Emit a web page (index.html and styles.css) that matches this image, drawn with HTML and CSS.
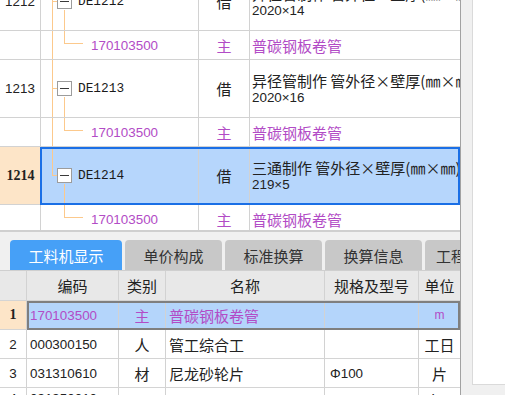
FILE: index.html
```html
<!DOCTYPE html>
<html lang="zh-CN">
  <head>
    <meta charset="UTF-8" />
    <title>定额子目</title>
    <link rel="stylesheet" href="styles.css">
  </head>
  <body>
    <div class="layout">
      <div class="main">
        <!-- 定额列表 -->
        <div class="grid">
          <div class="grid-body">
            <div class="row de">
              <div class="cell num">1212</div>
              <div class="cell tree trunk"><span class="toggle"></span><span class="de-code">DE1212</span></div>
              <div class="cell kind">借</div>
              <div class="cell name"><span class="line1">异径管制作 管外径×壁厚(㎜×㎜)</span><span class="line2">2020×14</span></div>
            </div>
            <div class="row sub">
              <div class="cell num"></div>
              <div class="cell tree trunk"><span class="mat-code">170103500</span></div>
              <div class="cell kind purple">主</div>
              <div class="cell name purple">普碳钢板卷管</div>
            </div>
            <div class="row de">
              <div class="cell num">1213</div>
              <div class="cell tree trunk"><span class="toggle"></span><span class="de-code">DE1213</span></div>
              <div class="cell kind">借</div>
              <div class="cell name"><span class="line1">异径管制作 管外径×壁厚(㎜×㎜)</span><span class="line2">2020×16</span></div>
            </div>
            <div class="row sub">
              <div class="cell num"></div>
              <div class="cell tree trunk"><span class="mat-code">170103500</span></div>
              <div class="cell kind purple">主</div>
              <div class="cell name purple">普碳钢板卷管</div>
            </div>
            <div class="row de selected">
              <div class="cell num">1214</div>
              <div class="cell tree trunk-end"><span class="toggle"></span><span class="de-code">DE1214</span></div>
              <div class="cell kind">借</div>
              <div class="cell name"><span class="line1">三通制作 管外径×壁厚(㎜×㎜)</span><span class="line2">219×5</span></div>
            </div>
            <div class="row sub">
              <div class="cell num"></div>
              <div class="cell tree"><span class="mat-code">170103500</span></div>
              <div class="cell kind purple">主</div>
              <div class="cell name purple">普碳钢板卷管</div>
            </div>
          </div>
        </div>

        <!-- 工料机 -->
        <div class="bottom">
          <div class="tabs">
            <div class="tab active">工料机显示</div>
            <div class="tab">单价构成</div>
            <div class="tab">标准换算</div>
            <div class="tab">换算信息</div>
            <div class="tab">工程量明细</div>
          </div>
          <div class="mat-table">
            <div class="mat-row head">
              <div class="mcell"></div>
              <div class="mcell c">编码</div>
              <div class="mcell c">类别</div>
              <div class="mcell c">名称</div>
              <div class="mcell c">规格及型号</div>
              <div class="mcell c">单位</div>
            </div>
            <div class="mat-row selected">
              <div class="mcell idx">1</div>
              <div class="mcell code purple">170103500</div>
              <div class="mcell c purple">主</div>
              <div class="mcell txt purple">普碳钢板卷管</div>
              <div class="mcell"></div>
              <div class="mcell c unit purple">m</div>
            </div>
            <div class="mat-row">
              <div class="mcell idx">2</div>
              <div class="mcell code">000300150</div>
              <div class="mcell c">人</div>
              <div class="mcell txt">管工综合工</div>
              <div class="mcell"></div>
              <div class="mcell c">工日</div>
            </div>
            <div class="mat-row">
              <div class="mcell idx">3</div>
              <div class="mcell code">031310610</div>
              <div class="mcell c">材</div>
              <div class="mcell txt">尼龙砂轮片</div>
              <div class="mcell spec">Φ100</div>
              <div class="mcell c">片</div>
            </div>
            <div class="mat-row last">
              <div class="mcell idx">4</div>
              <div class="mcell code">031350010</div>
              <div class="mcell c">材</div>
              <div class="mcell txt">低碳钢焊条</div>
              <div class="mcell spec">综合</div>
              <div class="mcell c">kg</div>
            </div>
          </div>
        </div>
      </div>
      <div class="side"></div>
    </div>
  </body>
</html>
```

FILE: styles.css
```css
body {
  margin: 0;
  background: #f0f0f0;
  font-family: "Liberation Sans", "Noto Sans CJK SC", sans-serif;
  color: #222;
  overflow: hidden;
}

.layout {
  display: flex;
  height: 395px;
}

.main {
  width: 461px;
  flex-shrink: 0;
  box-sizing: border-box;
  border-right: 1px solid #a2a2a2;
  overflow: hidden;
}

.side {
  flex: 1;
  margin-left: 11px;
  height: 384px;
  background: #fff;
  border-left: 1px solid #dadada;
  border-bottom: 1px solid #dadada;
}

/* top grid */

.grid {
  height: 230px;
  overflow: hidden;
  background: #fff;
  border-bottom: 2px solid #cfcfcf;
}

.grid-body {
  margin-top: -27px;
}

.row {
  display: grid;
  grid-template-columns: 41px 158px 51px 1fr;
  box-sizing: border-box;
  border-bottom: 1px solid #d2d2d2;
}

.row.de {
  height: 58px;
}

.row.sub {
  height: 29px;
}

.cell {
  box-sizing: border-box;
  border-right: 1px solid #d2d2d2;
  display: flex;
  align-items: center;
  overflow: hidden;
  white-space: nowrap;
}

.cell:last-child {
  border-right: none;
}

.num {
  justify-content: center;
  font-size: 13.4px;
}

.kind {
  justify-content: center;
  font-size: 15px;
}

.name {
  padding-left: 2px;
  font-size: 15px;
}

.row.de .name {
  flex-direction: column;
  align-items: flex-start;
  justify-content: center;
}

.line1,
.line2 {
  display: block;
  line-height: 17px;
}

.line1 {
  font-family: "Noto Sans CJK SC", sans-serif;
}

.line2 {
  font-size: 13.4px;
}

.purple {
  color: #b24cc6;
}

/* tree */

.tree {
  position: relative;
  padding-left: 16px;
}

.trunk::before,
.trunk-end::before {
  content: "";
  position: absolute;
  left: 11px;
  top: 0;
  bottom: 0;
  width: 1px;
  background: #fcc98c;
}

.trunk-end::before {
  bottom: 50%;
}

.row.de .tree::after {
  content: "";
  position: absolute;
  left: 23px;
  top: calc(50% + 8px);
  bottom: 0;
  width: 1px;
  background: #fcc98c;
}

.row.sub .tree::after {
  content: "";
  position: absolute;
  left: 23px;
  top: 0;
  width: 18px;
  height: 12px;
  border-left: 1px solid #fcc98c;
  border-bottom: 1px solid #fcc98c;
}

.toggle {
  position: relative;
  width: 15px;
  height: 15px;
  box-sizing: border-box;
  border: 1px solid #9c9c9c;
  background: linear-gradient(#3a3a3a, #3a3a3a) center / 9px 1px no-repeat, #fff;
  margin-right: 6px;
  flex-shrink: 0;
}

.toggle::before {
  content: "";
  position: absolute;
  right: calc(100% + 1px);
  top: 6px;
  width: 5px;
  height: 1px;
  background: #fcc98c;
}

.de-code {
  font-family: "Liberation Mono", monospace;
  font-size: 12.8px;
  color: #1a1a1a;
}

.mat-code {
  padding-left: 34px;
  font-size: 13.4px;
  color: #b24cc6;
}

.row.selected {
  position: relative;
}

.row.selected .cell {
  background: #b6d6fc;
}

.row.selected .num {
  background: #fde5c8;
  border-right: none;
  font-family: "Liberation Serif", serif;
  font-weight: bold;
  font-size: 14px;
}

.row.selected::after {
  content: "";
  position: absolute;
  left: 40px;
  right: 0;
  top: 0;
  bottom: -1px;
  border: 2px solid #1a6fe6;
  pointer-events: none;
}

/* bottom pane */

.bottom {
  padding-top: 8px;
}

.tabs {
  display: flex;
  gap: 3px;
  padding-left: 10px;
  border-bottom: 1px solid #cfcfcf;
  overflow: hidden;
}

.tab {
  flex-shrink: 0;
  width: 97px;
  height: 30px;
  display: flex;
  align-items: center;
  justify-content: center;
  background: #c8c8c8;
  color: #333;
  font-size: 15px;
  border-radius: 4px 4px 0 0;
  white-space: nowrap;
  overflow: hidden;
}

.tab.active {
  width: 112px;
  background: #46a0f7;
  color: #fff;
}

.mat-table {
  background: #fff;
}

.mat-row {
  display: grid;
  grid-template-columns: 27px 92px 47px 159px 94px 1fr;
  height: 29px;
  box-sizing: border-box;
  border-bottom: 1px solid #d4d4d4;
  font-size: 15px;
}

.mat-row.head {
  height: 30px;
  background: #e8e8e8;
}

.mat-row.last .mcell {
  align-items: flex-start;
  padding-top: 3px;
}

.mcell {
  box-sizing: border-box;
  border-right: 1px solid #d2d2d2;
  display: flex;
  align-items: center;
  white-space: nowrap;
  overflow: hidden;
}

.mcell:last-child {
  border-right: none;
}

.mcell.c {
  justify-content: center;
}

.idx {
  justify-content: center;
  font-size: 13.4px;
}

.code {
  padding-left: 3px;
  font-size: 13.4px;
}

.txt {
  padding-left: 3px;
}

.spec {
  padding-left: 5px;
  font-size: 13.4px;
}

.unit {
  font-size: 12px;
}

.mat-row.selected {
  position: relative;
  background: #b4d5fb;
}

.mat-row.selected .idx {
  background: #fde5c8;
  font-family: "Liberation Serif", serif;
  font-weight: bold;
  font-size: 14px;
}

.mat-row.selected::after {
  content: "";
  position: absolute;
  left: 27px;
  right: 0;
  top: 0;
  bottom: -1px;
  border: 2px solid #7f7f7f;
  pointer-events: none;
}
```
